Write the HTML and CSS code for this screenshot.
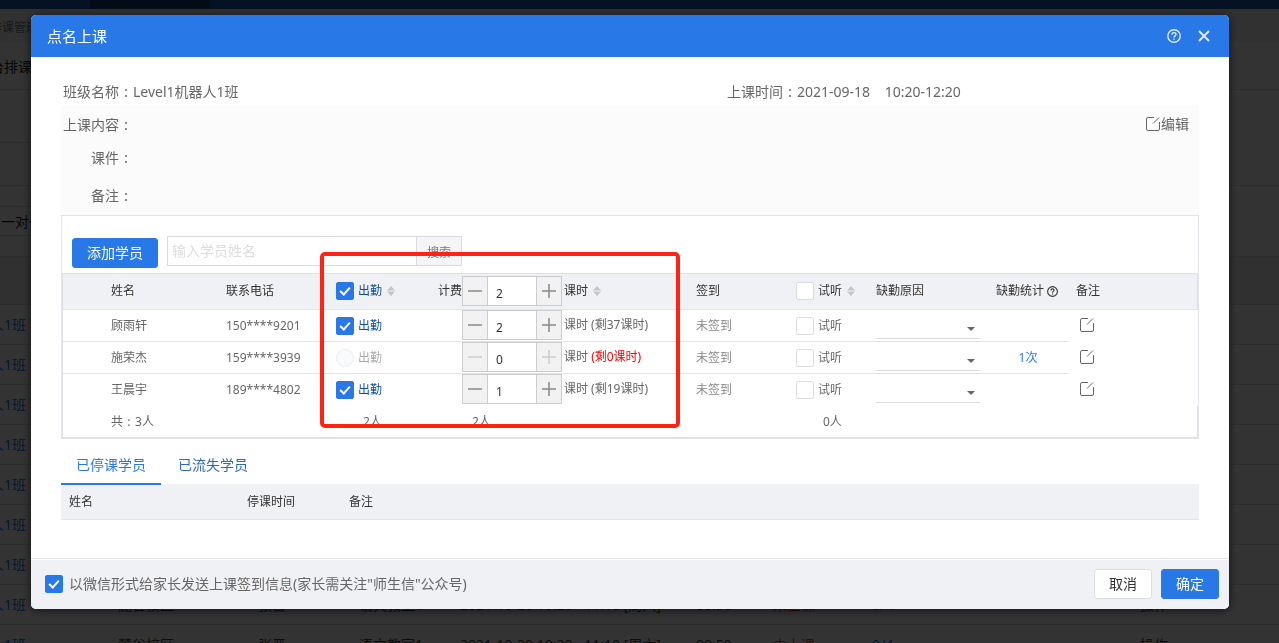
FILE: index.html
```html
<!DOCTYPE html>
<html lang="zh-CN">
<head>
  <meta charset="UTF-8">
  <title>点名上课</title>
  <link rel="stylesheet" href="styles.css">
</head>
<body>
  <!-- 排课管理列表 -->
  <div class="page">
    <div class="topbar"><div class="topbar-item"></div></div>
    <div class="crumb"><span class="cut">排课管理</span></div>
    <div class="page-tabs"><span class="cut">平台排课</span></div>
    <div class="filters">
      <div class="filter-line tall"></div>
    </div>
    <div class="filters">
      <div class="filter-line small"></div>
      <div class="filter-line">一对一</div>
    </div>
    <table class="lessons">
      <colgroup><col class="l-class"><col class="l-campus"><col class="l-teacher"><col class="l-room"><col class="l-time"><col class="l-len"><col class="l-state"><col class="l-count"><col></colgroup>
      <thead><tr><th colspan="9"></th></tr></thead>
      <tbody>
        <tr><td><a class="cut" href="#">机器人1班</a></td><td colspan="8"></td></tr>
        <tr><td><a class="cut" href="#">机器人1班</a></td><td colspan="8"></td></tr>
        <tr><td><a class="cut" href="#">机器人1班</a></td><td colspan="8"></td></tr>
        <tr><td><a class="cut" href="#">机器人1班</a></td><td colspan="8"></td></tr>
        <tr><td><a class="cut" href="#">机器人1班</a></td><td colspan="8"></td></tr>
        <tr><td><a class="cut" href="#">机器人1班</a></td><td colspan="8"></td></tr>
        <tr><td><a class="cut" href="#">机器人1班</a></td><td colspan="8"></td></tr>
        <tr><td><a class="cut" href="#">机器人1班</a></td><td>麓谷校区</td><td>张晋</td><td>语文教室1</td><td>2021-10-20 10:20 - 11:10 [周六]</td><td>00:50</td><td class="undone">未上课</td><td><a href="#">0/4</a></td><td>操作</td></tr>
        <tr><td><a class="cut" href="#">机器人1班</a></td><td>麓谷校区</td><td>张晋</td><td>语文教室1</td><td>2021-10-20 10:20 - 11:10 [周六]</td><td>00:50</td><td class="undone">未上课</td><td><a href="#">0/4</a></td><td>操作</td></tr>
      </tbody>
    </table>
  </div>

  <svg class="defs" aria-hidden="true">
    <symbol id="edit" viewBox="0 0 14 14"><path d="M8 .5H2Q.5.5.5 2v10q0 1.500 1.500 1.500h10q1.500 0 1.500-1.500V5M7 6.500 13 .5" fill="none" stroke="currentColor"/></symbol>
    <symbol id="help" viewBox="0 0 14 14"><g fill="none" stroke="currentColor" stroke-width="1.400"><circle cx="7" cy="7" r="6.200"/><path d="M5 5.700C5 3 9 3 9 5.500 9 7 7 6.800 7 8.500M7 9.500v1.300"/></g></symbol>
    <symbol id="close" viewBox="0 0 12 12"><path d="M1 1l10 10M11 1 1 11" fill="none" stroke="currentColor" stroke-width="2"/></symbol>
    <symbol id="minus" viewBox="0 0 14 14"><path d="M0 7h14" stroke="currentColor" stroke-width="1.500"/></symbol>
    <symbol id="plus" viewBox="0 0 14 14"><path d="M0 7h14M7 0v14" stroke="currentColor" stroke-width="1.500"/></symbol>
    <symbol id="sort" viewBox="0 0 8 10"><path d="M0 4.500 4 0l4 4.500zM0 5.500h8L4 10z" fill="currentColor"/></symbol>
  </svg>

  <div class="overlay">
    <div class="modal" role="dialog" aria-label="点名上课">
      <div class="modal-head">
        <h1>点名上课</h1>
        <button class="head-btn" aria-label="帮助"><svg width="14" height="14"><use href="#help"/></svg></button>
        <button class="head-btn" aria-label="关闭"><svg width="12" height="12"><use href="#close"/></svg></button>
      </div>

      <div class="modal-body">
        <div class="info">
          <div>班级名称<span class="colon">:</span>Level1机器人1班</div>
          <div>上课时间<span class="colon">:</span>2021-09-18 &nbsp;&nbsp; 10:20-12:20</div>
        </div>
        <div class="content">
          <div class="content-list">
            <div>上课内容<span class="colon">:</span></div>
            <div>课件<span class="colon">:</span></div>
            <div>备注<span class="colon">:</span></div>
          </div>
          <button class="edit-btn"><svg width="14" height="14"><use href="#edit"/></svg>编辑</button>
        </div>

        <div class="students">
          <div class="toolbar">
            <button class="btn primary add">添加学员</button>
            <div class="search">
              <input type="text" placeholder="输入学员姓名" aria-label="学员姓名">
              <button>搜索</button>
            </div>
          </div>
          <table class="roll">
            <colgroup><col class="c-gap"><col class="c-name"><col class="c-phone"><col class="c-attend"><col class="c-fee"><col class="c-sign"><col class="c-trial"><col class="c-reason"><col class="c-stat"><col></colgroup>
            <thead>
              <tr>
                <th></th>
                <th>姓名</th>
                <th>联系电话</th>
                <th><div class="cell"><label class="check on"><input type="checkbox" checked>出勤</label><svg class="sort" width="8" height="10"><use href="#sort"/></svg></div></th>
                <th><div class="cell">计费<div class="stepper"><button aria-label="减少"><svg width="14" height="14"><use href="#minus"/></svg></button><input type="text" value="2" aria-label="课时"><button aria-label="增加"><svg width="14" height="14"><use href="#plus"/></svg></button></div><span class="unit">课时</span><svg class="sort" width="8" height="10"><use href="#sort"/></svg></div></th>
                <th>签到</th>
                <th><div class="cell"><label class="check"><input type="checkbox">试听</label><svg class="sort" width="8" height="10"><use href="#sort"/></svg></div></th>
                <th>缺勤原因</th>
                <th><div class="cell">缺勤统计<svg class="tip" width="11" height="11"><use href="#help"/></svg></div></th>
                <th>备注</th>
              </tr>
            </thead>
            <tbody>
              <tr>
                <td></td>
                <td>顾雨轩</td>
                <td>150****9201</td>
                <td><label class="check on"><input type="checkbox" checked>出勤</label></td>
                <td class="fee"><div class="cell"><div class="stepper"><button aria-label="减少"><svg width="14" height="14"><use href="#minus"/></svg></button><input type="text" value="2" aria-label="课时"><button aria-label="增加"><svg width="14" height="14"><use href="#plus"/></svg></button></div><span class="unit">课时 (剩37课时)</span></div></td>
                <td class="unsigned">未签到</td>
                <td><label class="check"><input type="checkbox">试听</label></td>
                <td><div class="reason"><select aria-label="缺勤原因"><option></option></select></div></td>
                <td class="stat"></td>
                <td class="remark"><button aria-label="备注"><svg width="14" height="14"><use href="#edit"/></svg></button></td>
              </tr>
              <tr>
                <td></td>
                <td>施荣杰</td>
                <td>159****3939</td>
                <td><label class="check off"><input type="checkbox" disabled>出勤</label></td>
                <td class="fee"><div class="cell"><div class="stepper"><button aria-label="减少" disabled><svg width="14" height="14"><use href="#minus"/></svg></button><input type="text" value="0" aria-label="课时"><button aria-label="增加" disabled><svg width="14" height="14"><use href="#plus"/></svg></button></div><span class="unit">课时 <b>(剩0课时)</b></span></div></td>
                <td class="unsigned">未签到</td>
                <td><label class="check"><input type="checkbox">试听</label></td>
                <td><div class="reason"><select aria-label="缺勤原因"><option></option></select></div></td>
                <td class="stat"><a href="#">1次</a></td>
                <td class="remark"><button aria-label="备注"><svg width="14" height="14"><use href="#edit"/></svg></button></td>
              </tr>
              <tr>
                <td></td>
                <td>王晨宇</td>
                <td>189****4802</td>
                <td><label class="check on"><input type="checkbox" checked>出勤</label></td>
                <td class="fee"><div class="cell"><div class="stepper"><button aria-label="减少"><svg width="14" height="14"><use href="#minus"/></svg></button><input type="text" value="1" aria-label="课时"><button aria-label="增加"><svg width="14" height="14"><use href="#plus"/></svg></button></div><span class="unit">课时 (剩19课时)</span></div></td>
                <td class="unsigned">未签到</td>
                <td><label class="check"><input type="checkbox">试听</label></td>
                <td><div class="reason"><select aria-label="缺勤原因"><option></option></select></div></td>
                <td class="stat"></td>
                <td class="remark"><button aria-label="备注"><svg width="14" height="14"><use href="#edit"/></svg></button></td>
              </tr>
            </tbody>
            <tfoot>
              <tr>
                <td></td>
                <td>共<span class="colon">:</span>3人</td>
                <td></td>
                <td class="sum">2人</td>
                <td class="sum-fee">2人</td>
                <td></td>
                <td class="sum">0人</td>
                <td></td>
                <td></td>
                <td></td>
              </tr>
            </tfoot>
          </table>
        </div>

        <div class="tabs">
          <a class="tab active" href="#">已停课学员</a>
          <a class="tab" href="#">已流失学员</a>
        </div>
        <table class="stopped">
          <colgroup><col class="s-name"><col class="s-time"><col></colgroup>
          <thead><tr><th>姓名</th><th>停课时间</th><th>备注</th></tr></thead>
        </table>
      </div>

      <div class="modal-foot">
        <label class="check notice"><input type="checkbox" checked>以微信形式给家长发送上课签到信息(家长需关注"师生信"公众号)</label>
        <button class="btn">取消</button>
        <button class="btn primary">确定</button>
      </div>

      <div class="mark"></div>
    </div>
  </div>
</body>
</html>
```

FILE: styles.css
```css
* { box-sizing: border-box; }
body {
  margin: 0;
  height: 100vh;
  overflow: hidden;
  font: 14px/20px "Noto Sans", "Noto Sans CJK SC", sans-serif;
  color: #666;
}
button, input, select { font: inherit; color: inherit; margin: 0; }
button { padding: 0; border: 0; background: none; cursor: pointer; }
a { color: #2878e8; text-decoration: none; }
svg { display: block; flex: none; }
table { width: 100%; border-collapse: separate; border-spacing: 0; table-layout: fixed; }
th, td { padding: 0; text-align: left; font-weight: normal; }
.defs { position: absolute; width: 0; height: 0; }
.colon { font-family: "Noto Sans CJK JP", sans-serif; display: inline-block; width: 1em; text-align: center; }

/* 背景页面 */
.page { height: 100vh; overflow: hidden; background: #fff; }
.topbar { height: 9px; background: #1c5aad; padding-left: 90px; }
.topbar-item { width: 120px; height: 9px; background: #123c70; }
.crumb { height: 33px; line-height: 38px; background: #f5f5f5; color: #777; font-size: 12px; }
.crumb .cut { margin-left: -10px; }
.page-tabs { height: 48px; line-height: 50px; border-bottom: 1px solid #dcdcdc; color: #222; }
.page-tabs .cut { margin-left: -24px; }
.filters { border-bottom: 1px solid #dcdcdc; height: 96px; }
.filters + .filters { height: 71px; }
.filter-line { width: 50%; height: 29px; line-height: 29px; border-bottom: 1px solid #dcdcdc; padding-left: 1px; color: #222; }
.filter-line.tall { height: 53px; }
.filter-line.small { height: 21px; }
.lessons th { height: 48px; background: #f0f1f2; border-bottom: 1px solid #dcdcdc; }
.lessons td { height: 40px; border-bottom: 1px solid #dcdcdc; white-space: nowrap; color: #444; }
.lessons .cut { margin-left: -38px; padding-right: 4px; }
.lessons .undone { color: #e64b3c; }
.l-class { width: 118px; }
.l-campus { width: 140px; }
.l-teacher, .l-room { width: 101px; }
.l-time { width: 236px; }
.l-len { width: 77px; }
.l-state { width: 99px; }
.l-count { width: 268px; }

/* 弹窗 */
.overlay {
  position: fixed;
  inset: 0;
  padding: 15px 50px 0 31px;
  background: rgba(0, 0, 0, .8);
}
.modal {
  position: relative;
  background: #fff;
  border-radius: 5px;
  box-shadow: 0 1px 8px rgba(0, 0, 0, .7);
}
.modal-head {
  display: flex;
  align-items: center;
  gap: 17px;
  height: 42px;
  padding: 0 19px 0 16px;
  background: #2878e8;
  border-radius: 5px 5px 0 0;
  color: #fff;
}
.modal-head h1 { flex: 1; margin: 0; font-size: 15px; font-weight: normal; }
.head-btn { opacity: .85; }
.modal-body { padding: 24px 30px 38px; }

.info {
  display: grid;
  grid-template-columns: 664px 1fr;
  height: 25px;
  padding-left: 2px;
}
.content {
  display: flex;
  justify-content: space-between;
  align-items: flex-start;
  height: 109px;
  padding: 8px 10px 0 2px;
  background: #fbfbfb;
}
.content-list { display: grid; grid-template-rows: 33px 38px 20px; text-align: right; }
.edit-btn { display: flex; align-items: center; gap: 1px; }

.students { border: 1px solid #e3e4ea; }
.toolbar { display: flex; align-items: flex-end; gap: 9px; height: 57px; padding: 0 10px 5px; }
.btn {
  width: 58px;
  height: 30px;
  border: 1px solid #dcdee6;
  border-radius: 3px;
  background: #fff;
  color: #333;
}
.btn.primary { border-color: #2878e8; background: #2878e8; color: #fff; }
.btn.add { width: 86px; }
.search { display: flex; height: 30px; margin-bottom: 2px; }
.search input { width: 250px; padding: 0 4px; border: 1px solid #d9dae0; outline: 0; }
.search input::placeholder { color: #ddd; }
.search button {
  width: 45px;
  padding-top: 3px;
  border: 1px solid #d9dae0;
  border-left: 0;
  background: #f5f5f7;
  color: #777;
  font-size: 12px;
}

.roll { border: 1px solid #dfe0e6; border-right: 0; font-size: 12px; line-height: 18px; }
.roll th, .roll td { padding-left: 8px; white-space: nowrap; }
.roll th { height: 36px; padding-bottom: 1px; background: #f0f1f5; border-bottom: 1px solid #e3e4ea; color: #333; }
.roll td { height: 32px; border-bottom: 1px solid #e3e4ea; }
.roll tbody td:last-child, .roll tbody tr:last-child td, .roll tfoot td { border-bottom: 0; }
.roll th:last-child, .roll tfoot td:last-child { border-right: 1px solid #dfe0e6; }
.roll tfoot td { height: 31px; }
.c-gap { width: 40px; }
.c-name { width: 115px; }
.c-phone { width: 110px; }
.c-attend { width: 102px; }
.c-fee { width: 258px; }
.c-sign { width: 100px; }
.c-trial { width: 80px; }
.c-reason { width: 120px; }
.c-stat { width: 80px; }
.cell { display: flex; align-items: center; }
.sort { margin-left: 5px; color: #c4c5c9; }
.tip { margin-left: 3px; }
.roll .fee { padding-left: 32px; vertical-align: top; }
.roll .unsigned { color: #888; }
.roll .stat { text-align: center; padding: 0; }
.roll .remark { padding: 0 0 2px 12px; }
.roll .remark button { display: block; }
.roll .sum { padding-left: 35px; }
.roll .sum-fee { padding-left: 42px; }
.unit { margin-left: 2px; }
.unit b { color: #f00; font-weight: normal; }

.check { display: flex; align-items: center; gap: 4px; }
.check.on { color: #0d4d9f; }
.check.off { color: #aaa; }
.check input {
  appearance: none;
  display: grid;
  place-items: center;
  width: 18px;
  height: 18px;
  border: 1px solid #d9dbe6;
  border-radius: 2px;
  background: #fff;
}
.check input:checked { border-color: #2878e8; background: #2878e8; }
.check input:checked::after {
  content: "";
  width: 4px;
  height: 8px;
  margin-bottom: 2px;
  border: solid #fff;
  border-width: 0 2px 2px 0;
  transform: rotate(42deg);
}
.check input:disabled { border-color: #eceef2; border-radius: 50%; background: #f9fafc; }

.stepper { display: flex; width: 100px; height: 30px; border: 1px solid #ccc; background: #fff; }
.stepper button { display: grid; place-items: center; width: 24px; background: #f2f2f2; color: #888; }
.stepper button:disabled { color: #ccc; }
.stepper input {
  width: 50px;
  padding: 6px 0 0 8px;
  border: solid #ccc;
  border-width: 0 1px;
  outline: 0;
  color: #333;
}

.reason { display: grid; align-items: center; width: 104px; height: 26px; border-bottom: 1px solid #dcdcdc; }
.reason select {
  grid-area: 1 / 1;
  appearance: none;
  height: 25px;
  border: 0;
  outline: 0;
  background: none;
}
.reason::after {
  content: "";
  grid-area: 1 / 1;
  justify-self: end;
  margin: 7px 5px 0 0;
  border: solid transparent;
  border-width: 4px 4px 0;
  border-top-color: #666;
  pointer-events: none;
}

/* 选中下划线压住表头 1px */
.tabs { position: relative; display: flex; gap: 2px; margin: 9px 0 -1px; }
.tab { height: 37px; padding: 7px 15px 0; border-bottom: 2px solid transparent; color: #2b69bd; }
.tab.active { border-color: #2878e8; color: #2878e8; }
.stopped { font-size: 12px; line-height: 18px; }
.stopped th { height: 36px; padding-left: 8px; background: #f0f1f5; border-bottom: 1px solid #e3e4ea; color: #333; }
.s-name { width: 178px; }
.s-time { width: 102px; }

.modal-foot {
  display: flex;
  align-items: center;
  gap: 9px;
  height: 51px;
  padding: 0 10px 1px 14px;
  border-top: 1px solid #e3e4ea;
  border-radius: 0 0 5px 5px;
  background: #f0f1f5;
  box-shadow: inset 0 1px #fff;
}
.notice { flex: 1; gap: 6px; }

/* 重点区域标记 */
.mark {
  position: absolute;
  left: 289px;
  top: 237px;
  width: 360px;
  height: 176px;
  border: 4px solid #ff2314;
  border-radius: 5px;
  pointer-events: none;
}
```
